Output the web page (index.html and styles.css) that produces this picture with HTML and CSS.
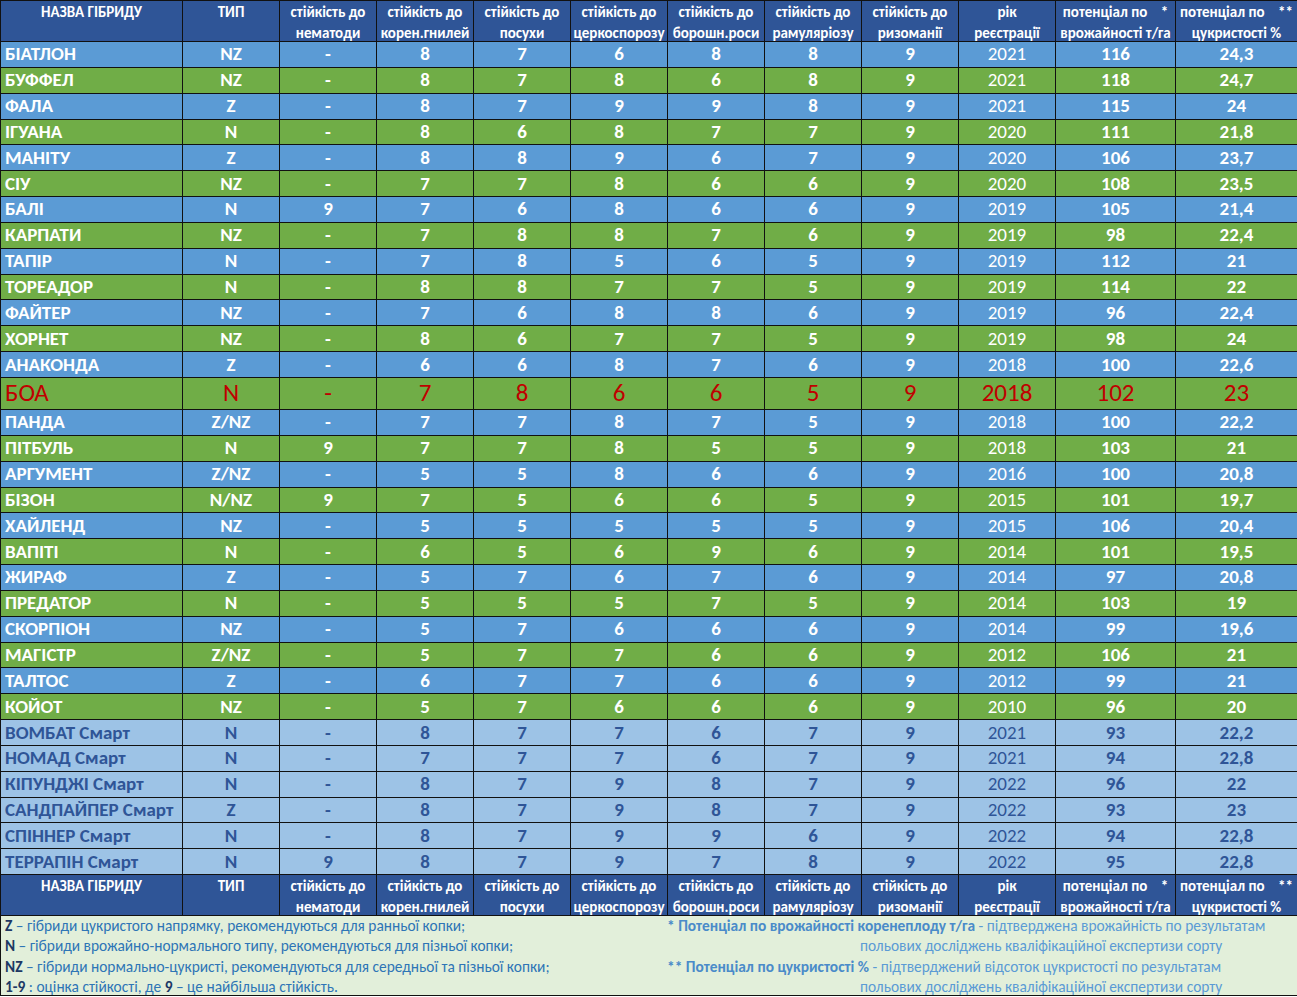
FILE: index.html
```html
<!DOCTYPE html>
<html lang="uk">
<head>
<meta charset="utf-8">
<title>Гібриди цукрового буряку</title>
<link rel="stylesheet" href="styles.css">
</head>
<body>
<table class="grid">
<colgroup>
<col class="c-name"><col class="c-n"><col class="c-n"><col class="c-n"><col class="c-n"><col class="c-n"><col class="c-n"><col class="c-n"><col class="c-n"><col class="c-n"><col class="c-w"><col class="c-w2">
</colgroup>
<thead>
<tr class="hdr">
<th><div class="l1">НАЗВА ГІБРИДУ</div><div class="l2"></div></th>
<th><div class="l1">ТИП</div><div class="l2"></div></th>
<th><div class="l1">стійкість до</div><div class="l2">нематоди</div></th>
<th><div class="l1">стійкість до</div><div class="l2">корен.гнилей</div></th>
<th><div class="l1">стійкість до</div><div class="l2">посухи</div></th>
<th><div class="l1">стійкість до</div><div class="l2">церкоспорозу</div></th>
<th><div class="l1">стійкість до</div><div class="l2">борошн.роси</div></th>
<th><div class="l1">стійкість до</div><div class="l2">рамуляріозу</div></th>
<th><div class="l1">стійкість до</div><div class="l2">ризоманії</div></th>
<th><div class="l1">рік</div><div class="l2">реєстрації</div></th>
<th><div class="l1">потенціал по <span class="ast">*</span></div><div class="l2">врожайності т/га</div></th>
<th><div class="l1">потенціал по <span class="ast">**</span></div><div class="l2">цукристості %</div></th>
</tr>
</thead>
<tbody>
<tr class="b"><td>БІАТЛОН</td><td>NZ</td><td>-</td><td>8</td><td>7</td><td>6</td><td>8</td><td>8</td><td>9</td><td class="yr">2021</td><td>116</td><td>24,3</td></tr>
<tr class="g"><td>БУФФЕЛ</td><td>NZ</td><td>-</td><td>8</td><td>7</td><td>8</td><td>6</td><td>8</td><td>9</td><td class="yr">2021</td><td>118</td><td>24,7</td></tr>
<tr class="b"><td>ФАЛА</td><td>Z</td><td>-</td><td>8</td><td>7</td><td>9</td><td>9</td><td>8</td><td>9</td><td class="yr">2021</td><td>115</td><td>24</td></tr>
<tr class="g"><td>ІГУАНА</td><td>N</td><td>-</td><td>8</td><td>6</td><td>8</td><td>7</td><td>7</td><td>9</td><td class="yr">2020</td><td>111</td><td>21,8</td></tr>
<tr class="b"><td>МАНІТУ</td><td>Z</td><td>-</td><td>8</td><td>8</td><td>9</td><td>6</td><td>7</td><td>9</td><td class="yr">2020</td><td>106</td><td>23,7</td></tr>
<tr class="g"><td>СІУ</td><td>NZ</td><td>-</td><td>7</td><td>7</td><td>8</td><td>6</td><td>6</td><td>9</td><td class="yr">2020</td><td>108</td><td>23,5</td></tr>
<tr class="b"><td>БАЛІ</td><td>N</td><td>9</td><td>7</td><td>6</td><td>8</td><td>6</td><td>6</td><td>9</td><td class="yr">2019</td><td>105</td><td>21,4</td></tr>
<tr class="g"><td>КАРПАТИ</td><td>NZ</td><td>-</td><td>7</td><td>8</td><td>8</td><td>7</td><td>6</td><td>9</td><td class="yr">2019</td><td>98</td><td>22,4</td></tr>
<tr class="b"><td>ТАПІР</td><td>N</td><td>-</td><td>7</td><td>8</td><td>5</td><td>6</td><td>5</td><td>9</td><td class="yr">2019</td><td>112</td><td>21</td></tr>
<tr class="g"><td>ТОРЕАДОР</td><td>N</td><td>-</td><td>8</td><td>8</td><td>7</td><td>7</td><td>5</td><td>9</td><td class="yr">2019</td><td>114</td><td>22</td></tr>
<tr class="b"><td>ФАЙТЕР</td><td>NZ</td><td>-</td><td>7</td><td>6</td><td>8</td><td>8</td><td>6</td><td>9</td><td class="yr">2019</td><td>96</td><td>22,4</td></tr>
<tr class="g"><td>ХОРНЕТ</td><td>NZ</td><td>-</td><td>8</td><td>6</td><td>7</td><td>7</td><td>5</td><td>9</td><td class="yr">2019</td><td>98</td><td>24</td></tr>
<tr class="b"><td>АНАКОНДА</td><td>Z</td><td>-</td><td>6</td><td>6</td><td>8</td><td>7</td><td>6</td><td>9</td><td class="yr">2018</td><td>100</td><td>22,6</td></tr>
<tr class="g boa"><td>БОА</td><td>N</td><td>-</td><td>7</td><td>8</td><td>6</td><td>6</td><td>5</td><td>9</td><td class="yr">2018</td><td>102</td><td>23</td></tr>
<tr class="b"><td>ПАНДА</td><td>Z/NZ</td><td>-</td><td>7</td><td>7</td><td>8</td><td>7</td><td>5</td><td>9</td><td class="yr">2018</td><td>100</td><td>22,2</td></tr>
<tr class="g"><td>ПІТБУЛЬ</td><td>N</td><td>9</td><td>7</td><td>7</td><td>8</td><td>5</td><td>5</td><td>9</td><td class="yr">2018</td><td>103</td><td>21</td></tr>
<tr class="b"><td>АРГУМЕНТ</td><td>Z/NZ</td><td>-</td><td>5</td><td>5</td><td>8</td><td>6</td><td>6</td><td>9</td><td class="yr">2016</td><td>100</td><td>20,8</td></tr>
<tr class="g"><td>БІЗОН</td><td>N/NZ</td><td>9</td><td>7</td><td>5</td><td>6</td><td>6</td><td>5</td><td>9</td><td class="yr">2015</td><td>101</td><td>19,7</td></tr>
<tr class="b"><td>ХАЙЛЕНД</td><td>NZ</td><td>-</td><td>5</td><td>5</td><td>5</td><td>5</td><td>5</td><td>9</td><td class="yr">2015</td><td>106</td><td>20,4</td></tr>
<tr class="g"><td>ВАПІТІ</td><td>N</td><td>-</td><td>6</td><td>5</td><td>6</td><td>9</td><td>6</td><td>9</td><td class="yr">2014</td><td>101</td><td>19,5</td></tr>
<tr class="b"><td>ЖИРАФ</td><td>Z</td><td>-</td><td>5</td><td>7</td><td>6</td><td>7</td><td>6</td><td>9</td><td class="yr">2014</td><td>97</td><td>20,8</td></tr>
<tr class="g"><td>ПРЕДАТОР</td><td>N</td><td>-</td><td>5</td><td>5</td><td>5</td><td>7</td><td>5</td><td>9</td><td class="yr">2014</td><td>103</td><td>19</td></tr>
<tr class="b"><td>СКОРПІОН</td><td>NZ</td><td>-</td><td>5</td><td>7</td><td>6</td><td>6</td><td>6</td><td>9</td><td class="yr">2014</td><td>99</td><td>19,6</td></tr>
<tr class="g"><td>МАГІСТР</td><td>Z/NZ</td><td>-</td><td>5</td><td>7</td><td>7</td><td>6</td><td>6</td><td>9</td><td class="yr">2012</td><td>106</td><td>21</td></tr>
<tr class="b"><td>ТАЛТОС</td><td>Z</td><td>-</td><td>6</td><td>7</td><td>7</td><td>6</td><td>6</td><td>9</td><td class="yr">2012</td><td>99</td><td>21</td></tr>
<tr class="g"><td>КОЙОТ</td><td>NZ</td><td>-</td><td>5</td><td>7</td><td>6</td><td>6</td><td>6</td><td>9</td><td class="yr">2010</td><td>96</td><td>20</td></tr>
<tr class="s"><td>ВОМБАТ Смарт</td><td>N</td><td>-</td><td>8</td><td>7</td><td>7</td><td>6</td><td>7</td><td>9</td><td class="yr">2021</td><td>93</td><td>22,2</td></tr>
<tr class="s"><td>НОМАД Смарт</td><td>N</td><td>-</td><td>7</td><td>7</td><td>7</td><td>6</td><td>7</td><td>9</td><td class="yr">2021</td><td>94</td><td>22,8</td></tr>
<tr class="s"><td>КІПУНДЖІ Смарт</td><td>N</td><td>-</td><td>8</td><td>7</td><td>9</td><td>8</td><td>7</td><td>9</td><td class="yr">2022</td><td>96</td><td>22</td></tr>
<tr class="s"><td>САНДПАЙПЕР Смарт</td><td>Z</td><td>-</td><td>8</td><td>7</td><td>9</td><td>8</td><td>7</td><td>9</td><td class="yr">2022</td><td>93</td><td>23</td></tr>
<tr class="s"><td>СПІННЕР Смарт</td><td>N</td><td>-</td><td>8</td><td>7</td><td>9</td><td>9</td><td>6</td><td>9</td><td class="yr">2022</td><td>94</td><td>22,8</td></tr>
<tr class="s"><td>ТЕРРАПІН Смарт</td><td>N</td><td>9</td><td>8</td><td>7</td><td>9</td><td>7</td><td>8</td><td>9</td><td class="yr">2022</td><td>95</td><td>22,8</td></tr>
<tr class="hdr">
<th><div class="l1">НАЗВА ГІБРИДУ</div><div class="l2"></div></th>
<th><div class="l1">ТИП</div><div class="l2"></div></th>
<th><div class="l1">стійкість до</div><div class="l2">нематоди</div></th>
<th><div class="l1">стійкість до</div><div class="l2">корен.гнилей</div></th>
<th><div class="l1">стійкість до</div><div class="l2">посухи</div></th>
<th><div class="l1">стійкість до</div><div class="l2">церкоспорозу</div></th>
<th><div class="l1">стійкість до</div><div class="l2">борошн.роси</div></th>
<th><div class="l1">стійкість до</div><div class="l2">рамуляріозу</div></th>
<th><div class="l1">стійкість до</div><div class="l2">ризоманії</div></th>
<th><div class="l1">рік</div><div class="l2">реєстрації</div></th>
<th><div class="l1">потенціал по <span class="ast">*</span></div><div class="l2">врожайності т/га</div></th>
<th><div class="l1">потенціал по <span class="ast">**</span></div><div class="l2">цукристості %</div></th>
</tr>
<tr class="legend">
<td colspan="12">
<div class="leg">
<div class="leg-left">
<div class="ln"><b>Z</b> – гібриди цукристого напрямку, рекомендуються для ранньої копки;</div>
<div class="ln"><b>N</b> – гібриди врожайно-нормального типу, рекомендуються для пізньої копки;</div>
<div class="ln"><b>NZ</b> – гібриди нормально-цукристі, рекомендуються для середньої та пізньої копки;</div>
<div class="ln"><b>1-9</b> : оцінка стійкості, де <b>9</b> – це найбільша стійкість.</div>
</div>
<div class="leg-right">
<div class="ln"><b>* Потенціал по врожайності коренеплоду т/га</b> - підтверджена врожайність по результатам</div>
<div class="ln ind">польових досліджень кваліфікаційної експертизи сорту</div>
<div class="ln"><b>** Потенціал по цукристості %</b> - підтверджений відсоток цукристості по результатам</div>
<div class="ln ind">польових досліджень кваліфікаційної експертизи сорту</div>
</div>
</div>
</td>
</tr>
</tbody>
</table>
</body>
</html>
```

FILE: styles.css
```css
html, body {
  margin: 0;
  padding: 0;
  background: #ffffff;
}

body {
  font-family: Carlito, Lato, "Liberation Sans", sans-serif;
}

.grid {
  border-collapse: collapse;
  table-layout: fixed;
  width: 1297px;
}

.c-name { width: 182px; }
.c-n { width: 97px; }
.c-w { width: 120px; }
.c-w2 { width: 122px; }

.grid th,
.grid td {
  border: 1px solid #111111;
  padding: 0;
  overflow: hidden;
  white-space: nowrap;
}

.hdr th {
  background: #2f5597;
  color: #ffffff;
  font-weight: 700;
  font-size: 15px;
  text-align: center;
  vertical-align: top;
  height: 39px;
}

.hdr .l1,
.hdr .l2 {
  height: 20px;
}

.hdr .l1 {
  line-height: 22px;
}

.hdr .l2 {
  line-height: 24px;
}

.ast {
  padding-left: 10px;
}

tbody tr.b,
tbody tr.g,
tbody tr.s {
  height: 25.85px;
}

tbody td {
  font-size: 19px;
  font-weight: 700;
  text-align: center;
  vertical-align: middle;
  line-height: 22px;
  color: #ffffff;
}

tbody td:first-child {
  text-align: left;
  padding-left: 4px;
}

tbody td.yr {
  font-weight: 400;
}

tr.b td { background: #5b9bd5; }
tr.g td { background: #70ad47; }
tr.s td { background: #9dc3e6; color: #2f5597; }

tbody tr.g.boa { height: 32px; }

tbody tr.boa td {
  color: #c00000;
  font-size: 25px;
  font-weight: 400;
  line-height: 28px;
}

tr.legend td {
  background: #e2efda;
  padding: 0;
  height: 79px;
  vertical-align: top;
}

.leg {
  display: flex;
  font-size: 15.4px;
  font-weight: 400;
  line-height: 20.3px;
  height: 79px;
  overflow: hidden;
}

.leg-left {
  width: 666px;
  flex: none;
  padding-left: 4px;
  box-sizing: border-box;
  color: #2e75b6;
}

.leg-left b {
  color: #203864;
}

.leg-right {
  color: #5b9bd5;
}

.leg-right b {
  color: #4a8bc9;
}

.ind {
  padding-left: 193px;
}
```
